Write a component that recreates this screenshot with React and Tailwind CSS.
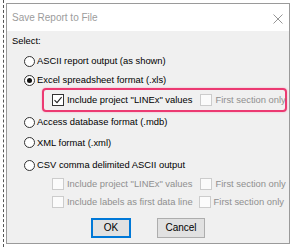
import React from 'react';

const Radio = ({ checked }) => (
    <span className="w-[11px] h-[11px] rounded-full border border-[#333] bg-white flex items-center justify-center shrink-0">
        {checked && <span className="w-[5px] h-[5px] rounded-full bg-[#111]" />}
    </span>
);

const Check = ({ checked, disabled }) => (
    <span
        className={`w-[12px] h-[12px] border flex items-center justify-center shrink-0 ${
            disabled ? 'border-[#cccccc] bg-[#fbfbfb]' : 'border-[#333] bg-white'
        }`}
    >
        {checked && (
            <svg width="10" height="10" viewBox="0 0 10 10">
                <path d="M1.5 5.2 L4 7.6 L8.6 2.2" fill="none" stroke="#222" strokeWidth="1.1" />
            </svg>
        )}
    </span>
);

const RadioRow = ({ label, checked, className }) => (
    <div className={`flex items-center gap-[2px] pl-[17px] ${className}`}>
        <Radio checked={checked} />
        <span className="whitespace-nowrap">{label}</span>
    </div>
);

const CheckItem = ({ label, checked, disabled }) => (
    <div className={`flex items-center gap-[3px] ${disabled ? 'text-[#8f8f8f]' : 'text-black'}`}>
        <Check checked={checked} disabled={disabled} />
        <span className="whitespace-nowrap">{label}</span>
    </div>
);

export default function App() {
    return (
        <div className="w-[293px] h-[251px] bg-white pl-[3px] font-['Liberation_Sans',Arial,sans-serif] text-[9.4px] leading-none">
            <div className="h-[247px] border-l border-dashed border-[#555] pl-[2px] pt-[3px]">
                <div className="w-[284px] h-[241px] border border-[#9a9a9a] flex flex-col">
                    {/* title bar */}
                    <div className="h-[27px] bg-white flex items-center justify-between pl-[5px] pr-[6px] pt-[1px]">
                        <span className="text-[#9c9c9c] text-[10px]">Save Report to File</span>
                        <svg width="10" height="10" viewBox="0 0 10 10" className="mt-[2px]">
                            <path d="M0.5 0.5 L9.5 9.5 M9.5 0.5 L0.5 9.5" stroke="#8a8a8a" strokeWidth="0.9" />
                        </svg>
                    </div>

                    {/* body */}
                    <div className="flex-1 bg-[#f0f0f0] flex flex-col text-black">
                        <div className="h-[19px] flex items-center pl-[5px]">Select:</div>
                        <RadioRow className="h-[22px]" label="ASCII report output (as shown)" />
                        <RadioRow className="h-[16px]" label="Excel spreadsheet format (.xls)" checked />

                        <div className="ml-[35px] w-[245px] h-[24px] border-2 border-[#ec3a72] rounded-[4px] shadow-[0_0_2px_#f7a0bd] flex items-center gap-[8px] pl-[8px]">
                            <CheckItem label={'Include project "LINEx" values'} checked />
                            <CheckItem label="First section only" disabled />
                        </div>

                        <RadioRow className="h-[20px]" label="Access database format (.mdb)" />
                        <RadioRow className="h-[21px]" label="XML format (.xml)" />
                        <RadioRow className="h-[24px]" label="CSV comma delimited ASCII output" />

                        <div className="h-[14px] flex items-center gap-[8px] pl-[45px]">
                            <CheckItem label={'Include project "LINEx" values'} disabled />
                            <CheckItem label="First section only" disabled />
                        </div>
                        <div className="h-[22px] flex items-center gap-[6px] pl-[45px]">
                            <CheckItem label="Include labels as first data line" disabled />
                            <CheckItem label="First section only" disabled />
                        </div>

                        <div className="mt-[5px] flex items-center gap-[26px] pl-[84px]">
                            <button className="w-[40px] h-[20px] border-2 border-[#0078d7] bg-[#e1e1e1] text-[10px] leading-none">
                                OK
                            </button>
                            <button className="w-[48px] h-[20px] border border-[#adadad] bg-[#e1e1e1] text-[10px] leading-none">
                                Cancel
                            </button>
                        </div>
                    </div>
                </div>
            </div>
        </div>
    );
}
